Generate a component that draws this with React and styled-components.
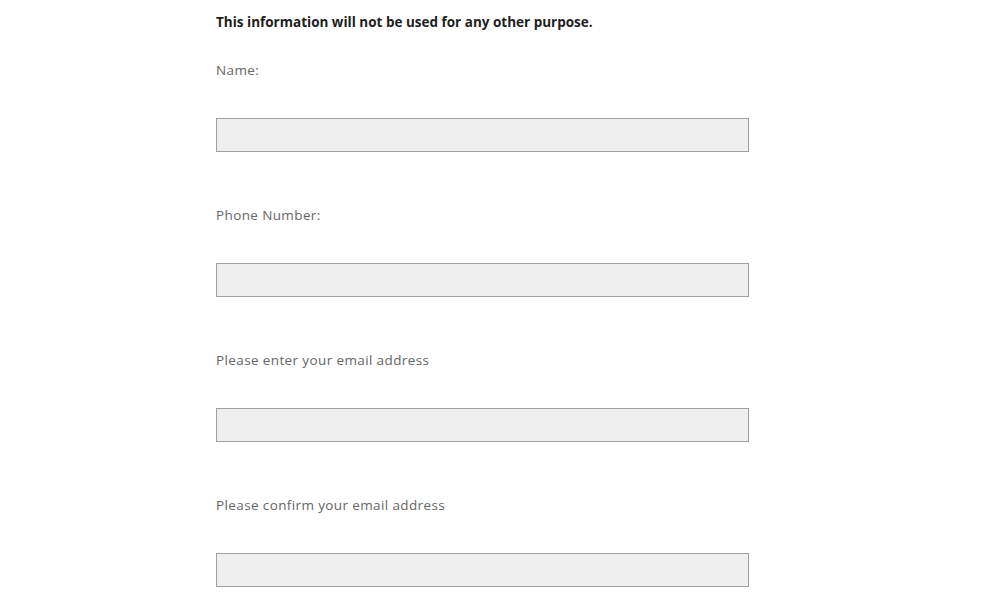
import React from "react";
import styled, { createGlobalStyle } from "styled-components";

const GlobalStyle = createGlobalStyle`
    body {
        margin: 0;
        background: #ffffff;
        font-family: "Open Sans", "Noto Sans", sans-serif;
    }
`;

const fields = [
    { id: "name", label: "Name:" },
    { id: "phone", label: "Phone Number:" },
    { id: "email", label: "Please enter your email address" },
    { id: "confirm", label: "Please confirm your email address" },
];

const App = () => {
    return (
        <>
            <GlobalStyle />
            <Wrapper>
                <Notice>This information will not be used for any other purpose.</Notice>
                {fields.map((f) => (
                    <Field key={f.id}>
                        <Label htmlFor={f.id}>{f.label}</Label>
                        <Input id={f.id} type="text" />
                    </Field>
                ))}
            </Wrapper>
        </>
    );
};

const Wrapper = styled.div`
    width: 533px;
    padding: 13px 0 0 216px;
    display: flex;
    flex-direction: column;
`;

const Notice = styled.p`
    margin: 0 0 30px;
    font-size: 13.5px;
    line-height: 18px;
    font-weight: 700;
    color: #1e1e1e;
`;

const Field = styled.div`
    display: flex;
    flex-direction: column;
    margin-bottom: 54px;
`;

const Label = styled.label`
    font-size: 13.5px;
    line-height: 18px;
    letter-spacing: 0.38px;
    color: #666666;
    margin-bottom: 39px;
`;

const Input = styled.input`
    box-sizing: border-box;
    width: 533px;
    height: 34px;
    margin: 0;
    padding: 0 8px;
    background: #efefef;
    border: 1px solid #a0a0a0;
    border-radius: 0;
    font-family: inherit;
    font-size: 13px;
    outline: none;
`;

export default App;
